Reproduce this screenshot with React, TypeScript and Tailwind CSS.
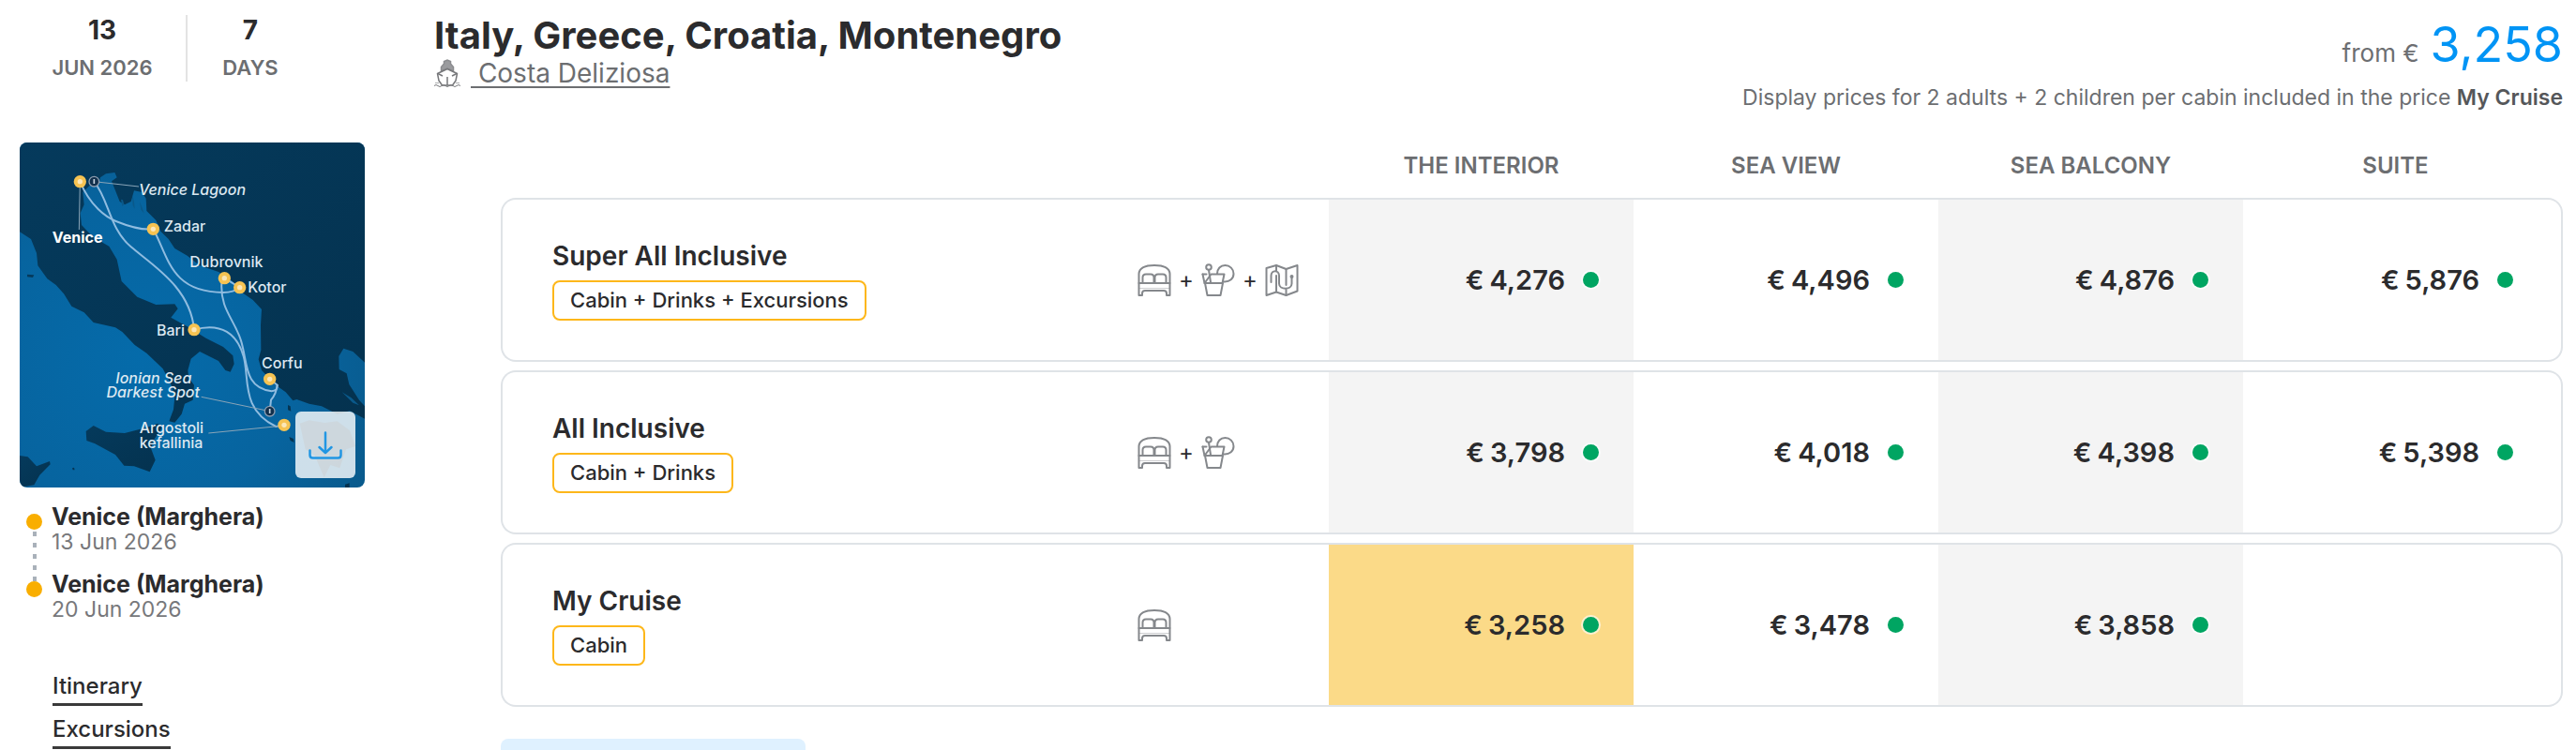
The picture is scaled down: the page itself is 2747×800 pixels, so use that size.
import { Fragment, type ReactNode } from 'react';

type IconKind = 'cabin' | 'drinks' | 'excursions';

const categories = ['The Interior', 'Sea View', 'Sea Balcony', 'Suite'];

const packages: { name: string; tag: string; icons: IconKind[]; prices: string[]; selected?: number }[] = [
  {
    name: 'Super All Inclusive',
    tag: 'Cabin + Drinks + Excursions',
    icons: ['cabin', 'drinks', 'excursions'],
    prices: ['4,276', '4,496', '4,876', '5,876'],
  },
  {
    name: 'All Inclusive',
    tag: 'Cabin + Drinks',
    icons: ['cabin', 'drinks'],
    prices: ['3,798', '4,018', '4,398', '5,398'],
  },
  {
    name: 'My Cruise',
    tag: 'Cabin',
    icons: ['cabin'],
    prices: ['3,258', '3,478', '3,858', ''],
    selected: 0,
  },
];

const stops = [
  { port: 'Venice (Marghera)', date: '13 Jun 2026' },
  { port: 'Venice (Marghera)', date: '20 Jun 2026' },
];

function LineIcon({ children, label }: { children: ReactNode; label: string }) {
  return (
    <svg
      role="img"
      aria-label={label}
      viewBox="0 0 36 36"
      className="size-9"
      fill="none"
      stroke="#85888c"
      strokeWidth="2"
      strokeLinejoin="round"
      strokeLinecap="round"
    >
      {children}
    </svg>
  );
}

function PackageIcon({ kind }: { kind: IconKind }) {
  if (kind === 'cabin') {
    return (
      <LineIcon label="Cabin">
        <path d="M1.5 21V11C2 4 9 2 18 2s16 2 16.5 9v10" />
        <path d="M5.5 21v-6q0-3.500 3.500-3.500h5q3.500 0 3.500 3.500v6M18.500 21v-6q0-3.500 3.500-3.500h5q3.500 0 3.500 3.500v6" />
        <path d="M1.500 21h33v13h-3.500v-2q0-3-3-3H8q-3 0-3 3v2H1.500z" />
        <path d="M1.500 26.500h33" strokeWidth="1" opacity="0.4" />
      </LineIcon>
    );
  }
  if (kind === 'drinks') {
    return (
      <LineIcon label="Drinks">
        <circle cx="8" cy="4" r="2.800" />
        <path d="M8 7l2 13" />
        <path d="M1.500 11.500h4M10.500 11.500h14l-2 9.500H3.500z" />
        <path d="M1.500 11.500l2 9.500" />
        <path d="M4 21l2.500 13h14L23 21" />
        <path d="M17 11C17 5.500 20.500 2 25.500 2c5 0 9 4 9 9 0 5-4 9-10.500 8.500" />
      </LineIcon>
    );
  }
  return (
    <LineIcon label="Excursions">
      <path d="M1.500 5L12 2l10.500 4L34.500 2v27.500L22.500 34 12 30.500 1.500 34z" />
      <path d="M12 2v6M12 13v17.500M22.500 6v17M22.500 28v6" />
      <path d="M6.500 20v-7c0-6.500 8.500-6.500 8.500 0v8.500c0 7 13.500 7 13.500 0V15" />
      <circle cx="28.500" cy="14" r="1" />
    </LineIcon>
  );
}

function ShipIcon() {
  return (
    <svg aria-hidden="true" viewBox="0 0 28 30" className="h-[30px] w-7 shrink-0" fill="none" stroke="#77787b" strokeWidth="1.500">
      <path d="M10.500 5V2.500L14 1l3.500 1.500V5l3 3.500V13l-6.500-3-6.500 3V8.500z" fill="#9a9b9e" stroke="#8b8c8f" />
      <path d="M3.500 15.500L14 10.500l10.500 5L23 23l-3.500 5h-11L5 23z" strokeLinejoin="round" />
      <path d="M14 19v9M4 15.500l5 2.500M24 15.500L19 18" />
      <path d="M0 28.500q2-2 4 0t4 0 4 0 4 0 4 0 4 0 4 0" strokeWidth="1" />
      <path d="M1 25.500h4M23 25.500h4" strokeWidth="1" opacity="0.6" />
    </svg>
  );
}

function DownloadIcon() {
  return (
    <svg
      aria-hidden="true"
      viewBox="0 0 36 30"
      className="h-[30px] w-9"
      fill="none"
      stroke="#2196e3"
      strokeWidth="2.500"
      strokeLinecap="round"
      strokeLinejoin="round"
    >
      <path d="M18 1.500v21M11.500 17l6.500 6 6.500-6" />
      <path d="M1.500 20.500v5q0 3 3 3h27q3 0 3-3v-5" />
    </svg>
  );
}

function RouteMap() {
  const ports = [
    [257, 161],
    [491, 313],
    [719, 470],
    [768, 500],
    [622, 635],
    [864, 793],
    [910, 940],
  ];
  const sights = [
    [302, 161],
    [864, 896],
  ];
  return (
    <svg role="img" aria-label="Cruise route map" viewBox="64 36 1104 1104" className="block h-auto w-full rounded-lg">
      <defs>
        <radialGradient id="sea" cx="0.35" cy="0.62" r="0.75">
          <stop offset="0" stopColor="#056baa" />
          <stop offset="0.6" stopColor="#07649f" />
          <stop offset="1" stopColor="#095a8c" />
        </radialGradient>
        <linearGradient id="land" x1="0" y1="0" x2="1" y2="1">
          <stop offset="0" stopColor="#053a5c" />
          <stop offset="1" stopColor="#04324f" />
        </linearGradient>
      </defs>
      <rect x="64" y="36" width="1104" height="1104" fill="url(#sea)" />
      <g fill="url(#land)">
        <path d="M64 36H1168V740L1130 705 1100 695 1085 720 1086 762 1110 775 1118 810 1150 860 1168 880V920L1120 895 1080 905 1030 880 990 872 950 858 938 862 915 835 880 810 862 790 838 765 828 730 836 700 835 620 838 570 810 540 770 512 745 480 700 450 640 430 600 398 560 375 540 345 515 320 500 285 470 255 468 215 455 195 430 190 420 225 400 235 384 225 370 190 358 160 375 148 368 132 340 136 322 148 318 165 290 172 266 195 270 235 258 262 262 300 298 338 350 368 375 410 390 480 440 530 500 555 560 553 570 568 548 596 600 625 660 662 715 690 746 718 750 745 738 770 722 765 700 735 640 705 612 728 602 765 605 790 622 812 618 860 592 872 582 905 560 932 542 928 556 890 560 850 548 810 522 760 470 710 432 684 392 642 370 628 300 612 270 580 230 560 205 520 180 492 152 472 122 430 118 390 100 345 64 322z" />
        <path d="M276 960L300 942 340 962 400 966 470 948 505 935 522 945 495 985 484 1015 498 1052 480 1090 430 1072 398 1070 370 1035 305 1000 278 990z" />
        <path d="M64 1038L90 1042 118 1072 160 1056 162 1066 128 1100 110 1132 64 1140z" />
        <path d="M960 935l30-10 50 8 40-5 40 30 18 50-30 10-20 60-30-10-20 40-30-70-30-20z" />
        <path d="M88 458l22 2-4 8-18-2zM926 978l14 6 2 12-12-6zM922 876l8 4 2 16-10-4zM232 1078l6-2 2 8h-6zM1105 1130l14-4v14h-14z" />
      </g>
      <g fill="#0a598a">
        <path d="M388 218l6 2 4 14-6 6zM424 202l6 24 2 22-6-10zM448 225l8 20 6 18-10-12zM1095 835l30 18 25 24-20-8z" />
      </g>
      <g fill="none" stroke="#8fbce0" strokeWidth="6" strokeLinecap="round">
        <path d="M257 161C290 240 340 275 372 288S450 318 491 313" />
        <path d="M491 313C540 400 545 515 715 516Q750 515 768 500L719 470" />
        <path d="M302 161C350 220 350 310 420 370S610 500 622 635" />
        <path d="M710 485C705 570 750 600 772 670S780 820 870 832Q890 830 888 812L864 793" />
        <path d="M622 635C710 610 760 650 780 720S770 890 884 945L910 940" />
        <path d="M888 812Q885 840 868 860L864 896" />
      </g>
      <g fill="none" stroke="#8aa5b8" strokeWidth="3">
        <path d="M302 161L445 177M257 161L254 315M645 850L864 896M668 966L910 942" />
      </g>
      {ports.map(([x, y]) => (
        <g key={`${x}-${y}`}>
          <circle cx={x} cy={y} r="20" fill="#f6c352" />
          <circle cx={x} cy={y} r="8" fill="#fff" opacity="0.6" />
        </g>
      ))}
      {sights.map(([x, y]) => (
        <g key={`${x}-${y}`}>
          <circle cx={x} cy={y} r="16" fill="#12304c" stroke="#8d9db0" strokeWidth="4" />
          <path d={`M${x} ${y - 8}v15`} stroke="#c9d4df" strokeWidth="5" />
        </g>
      ))}
      <g fill="#dce8f1" fontSize="48" fontWeight="500">
        <text x="445" y="205" fontStyle="italic">Venice Lagoon</text>
        <text x="525" y="322">Zadar</text>
        <text x="168" y="358" fontWeight="700" fill="#fff">Venice</text>
        <text x="608" y="435">Dubrovnik</text>
        <text x="794" y="516">Kotor</text>
        <text x="592" y="653" textAnchor="end">Bari</text>
        <text x="838" y="758">Corfu</text>
        <text x="614" y="806" textAnchor="end" fontStyle="italic">Ionian Sea</text>
        <text x="640" y="853" textAnchor="end" fontStyle="italic">Darkest Spot</text>
        <text x="447" y="966">Argostoli</text>
        <text x="447" y="1014">kefallinia</text>
      </g>
    </svg>
  );
}

function Sidebar() {
  return (
    <aside className="w-[463px] shrink-0">
      <div className="flex h-[120px] items-start pt-4 pl-5 text-center">
        <div className="w-[178px] font-semibold">
          <p className="text-[28px] leading-8 font-bold">13</p>
          <p className="mt-2 text-[22px] leading-8 text-[#6c6e71] uppercase">Jun 2026</p>
        </div>
        <div className="h-[71px] w-[136px] border-l-2 border-[#e3e3e3] font-semibold">
          <p className="text-[28px] leading-8 font-bold">7</p>
          <p className="mt-2 text-[22px] leading-8 text-[#6c6e71] uppercase">Days</p>
        </div>
      </div>

      <div className="relative mt-8 ml-[21px] w-[368px]">
        <RouteMap />
        <button
          type="button"
          aria-label="Download map"
          className="absolute right-[10px] bottom-[10px] flex h-[71px] w-16 items-center justify-center rounded-md bg-white/80"
        >
          <DownloadIcon />
        </button>
      </div>

      <ol className="mt-[18px] pl-7">
        {stops.map((stop, i) => {
          const last = i === stops.length - 1;
          return (
            <li key={stop.date} className="flex gap-[10px]">
              <div className="flex w-[17px] flex-col items-center pt-[10px]">
                <span className="size-[17px] shrink-0 rounded-full bg-[#f9ae00]" />
                {!last && (
                  <span className="mt-[2px] -mb-[10px] w-1 flex-1 bg-[repeating-linear-gradient(to_bottom,#a9b1ba_0_5px,transparent_5px_12px)]" />
                )}
              </div>
              <div className={last ? '' : 'pb-[18px]'}>
                <p className="text-[25px] leading-[27px] font-bold">{stop.port}</p>
                <p className="text-[23px] leading-[27px] text-[#77787b]">{stop.date}</p>
              </div>
            </li>
          );
        })}
      </ol>

      <nav className="mt-[52px] flex flex-col items-start gap-[9px] pl-14">
        {['Itinerary', 'Excursions'].map((label) => (
          <a
            key={label}
            href={`#${label.toLowerCase()}`}
            className="border-b-[3px] border-[#3a3a3a] pb-[2px] text-[24px] leading-8 font-medium"
          >
            {label}
          </a>
        ))}
      </nav>
    </aside>
  );
}

function PriceTable() {
  return (
    <table className="w-full table-fixed border-separate border-spacing-x-0 border-spacing-y-[9px]">
      <colgroup>
        <col />
        <col className="w-[204px]" />
        <col className="w-[325px]" />
        <col className="w-[325px]" />
        <col className="w-[325px]" />
        <col className="w-[341px]" />
      </colgroup>
      <thead>
        <tr className="h-[54px] text-[24px] text-[#6c6e71] uppercase">
          <td colSpan={2} />
          {categories.map((c) => (
            <th key={c} scope="col" className="px-0 pt-1 pb-0 font-semibold last:pr-4">
              {c}
            </th>
          ))}
        </tr>
      </thead>
      <tbody>
        {packages.map((pkg) => (
          <tr key={pkg.name} className="h-[175px]">
            <th
              scope="row"
              className="rounded-l-2xl border-y-2 border-l-2 border-[#dfe3e7] py-0 pr-0 pl-[53px] text-left font-normal"
            >
              <p className="text-[28px] leading-9 font-semibold">{pkg.name}</p>
              <span className="mt-2 inline-flex h-[43px] items-center rounded-lg border-2 border-[#fdb71a] px-[17px] text-[22px] font-medium">
                {pkg.tag}
              </span>
            </th>
            <td className="border-y-2 border-[#dfe3e7] p-0">
              <div className="flex items-center gap-2">
                {pkg.icons.map((kind, i) => (
                  <Fragment key={kind}>
                    {i > 0 && <span className="text-[24px] leading-8">+</span>}
                    <PackageIcon kind={kind} />
                  </Fragment>
                ))}
              </div>
            </td>
            {pkg.prices.map((price, i) => {
              const bg = pkg.selected === i ? 'bg-[#fbda88]' : i % 2 === 0 ? 'bg-[#f4f4f4]' : 'bg-white';
              return (
                <td
                  key={categories[i]}
                  className={`border-y-2 border-[#dfe3e7] py-0 pr-[37px] pl-0 last:rounded-r-2xl last:border-r-2 last:pr-[51px] ${bg}`}
                >
                  {price && (
                    <a href="#book" className="flex items-center justify-end gap-[19px] text-[29px] font-semibold">
                      <span className="flex gap-[6px]">
                        <span>€</span>
                        <span>{price}</span>
                      </span>
                      <span className="size-[17px] rounded-full bg-[#00a562] ring-2 ring-white/60" />
                    </a>
                  )}
                </td>
              );
            })}
          </tr>
        ))}
      </tbody>
    </table>
  );
}

export default function App() {
  return (
    <div className="flex items-start bg-white font-['Inter','Open_Sans',sans-serif] text-[#2b2b2d]">
      <Sidebar />
      <main className="min-w-0 flex-1 pr-[14px]">
        <header className="flex h-[120px] items-start justify-between">
          <div className="pt-4">
            <h1 className="text-[40px] leading-[44px] font-bold">Italy, Greece, Croatia, Montenegro</h1>
            <div className="flex items-center gap-[11px] text-[28px] leading-9 text-[#6c6e71]">
              <ShipIcon />
              <a href="#ship" className="whitespace-pre underline decoration-2 underline-offset-4">
                {' Costa Deliziosa'}
              </a>
            </div>
          </div>
          <div className="pt-4 text-right text-[#6c6e71]">
            <p className="flex items-baseline justify-end gap-3">
              <span className="text-[26px]">from €</span>
              <span className="text-[52px] leading-[64px] text-[#0094f5]">3,258</span>
            </p>
            <p className="mt-2 text-[23px] leading-8">
              Display prices for 2 adults + 2 children per cabin included in the price{' '}
              <strong className="font-semibold text-[#55575a]">My Cruise</strong>
            </p>
          </div>
        </header>

        <section className="mt-[19px] pl-[71px]">
          <PriceTable />
          <div className="mt-[25px] h-3 w-[325px] rounded-t-lg bg-[#dff1ff]" />
        </section>
      </main>
    </div>
  );
}
